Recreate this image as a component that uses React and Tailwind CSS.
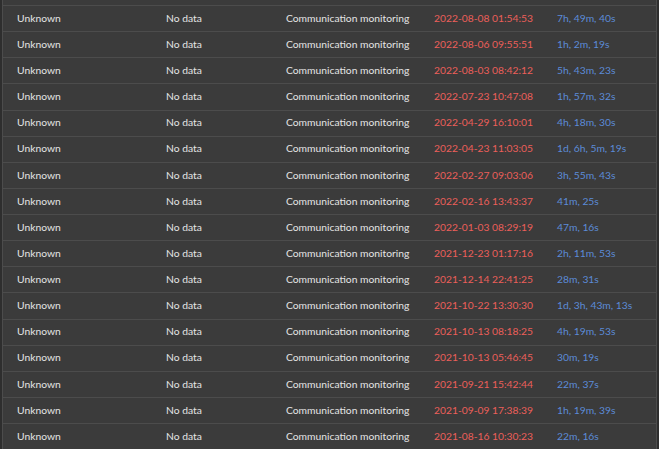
import React from "react";

const rows = [
  ["2022-08-08 01:54:53", "7h, 49m, 40s"],
  ["2022-08-06 09:55:51", "1h, 2m, 19s"],
  ["2022-08-03 08:42:12", "5h, 43m, 23s"],
  ["2022-07-23 10:47:08", "1h, 57m, 32s"],
  ["2022-04-29 16:10:01", "4h, 18m, 30s"],
  ["2022-04-23 11:03:05", "1d, 6h, 5m, 19s"],
  ["2022-02-27 09:03:06", "3h, 55m, 43s"],
  ["2022-02-16 13:43:37", "41m, 25s"],
  ["2022-01-03 08:29:19", "47m, 16s"],
  ["2021-12-23 01:17:16", "2h, 11m, 53s"],
  ["2021-12-14 22:41:25", "28m, 31s"],
  ["2021-10-22 13:30:30", "1d, 3h, 43m, 13s"],
  ["2021-10-13 08:18:25", "4h, 19m, 53s"],
  ["2021-10-13 05:46:45", "30m, 19s"],
  ["2021-09-21 15:42:44", "22m, 37s"],
  ["2021-09-09 17:38:39", "1h, 19m, 39s"],
  ["2021-08-16 10:30:23", "22m, 16s"],
];

function Row({ date, dur }) {
  return (
    <div className="flex h-[26.125px] items-center whitespace-nowrap border-t border-[#4c4c4c] text-[10.3px]">
      <div className="w-[149px] pl-[14px] text-[#e4e4e4]">Unknown</div>
      <div className="w-[120px] pl-[14px] text-[#e4e4e4]">No data</div>
      <div className="w-[148px] pl-[14px] text-[#e4e4e4]">Communication monitoring</div>
      <div className="w-[123px] pl-[14px] text-[#ec5f5a]">{date}</div>
      <div className="flex-1 pl-[14px] text-[#5b8bd8]">{dur}</div>
    </div>
  );
}

export default function App() {
  return (
    <div
      className="h-[449px] w-[659px] overflow-hidden bg-[#2e2e2e] px-[2px]"
      style={{ fontFamily: "Lato, 'Noto Sans', sans-serif" }}
    >
      <div className="h-full border-x border-[#4c4c4c] bg-[#3b3b3b]">
        <div className="h-[5px]" />
        {rows.map(([d, t], i) => (
          <Row key={i} date={d} dur={t} />
        ))}
      </div>
    </div>
  );
}
